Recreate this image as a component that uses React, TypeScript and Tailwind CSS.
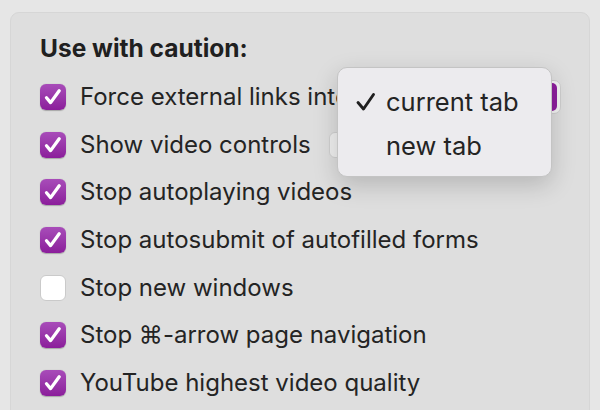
import React from 'react';

type Row = { label: string; checked: boolean; extra?: 'select' | 'toggle' };

const rows: Row[] = [
  { label: 'Force external links into', checked: true, extra: 'select' },
  { label: 'Show video controls', checked: true, extra: 'toggle' },
  { label: 'Stop autoplaying videos', checked: true },
  { label: 'Stop autosubmit of autofilled forms', checked: true },
  { label: 'Stop new windows', checked: false },
  { label: 'Stop ⌘-arrow page navigation', checked: true },
  { label: 'YouTube highest video quality', checked: true },
];

function Checkbox({ checked }: { checked: boolean }) {
  if (!checked) {
    return <div className="h-[26px] w-[26px] shrink-0 rounded-[6px] border border-[#cacaca] bg-white" />;
  }
  return (
    <div className="flex h-[26px] w-[26px] shrink-0 items-center justify-center rounded-[6px] bg-gradient-to-b from-[#a84cb9] to-[#8b1d9b] shadow-[0_0.5px_1px_rgba(0,0,0,0.25)]">
      <svg width="26" height="26" viewBox="0 0 26 26">
        <path d="M6.5 13.8 L10.6 18.6 L19.2 6.8" fill="none" stroke="white" strokeWidth="3.3" strokeLinecap="round" strokeLinejoin="round" />
      </svg>
    </div>
  );
}

export default function App() {
  return (
    <div className="relative h-[410px] w-[600px] overflow-hidden bg-[#e6e6e6] px-[10px] pt-[12px] font-['Inter','Liberation_Sans',sans-serif] text-[#242424]">
      <div className="h-[420px] rounded-[9px] border border-[#d6d6d6] bg-[#dedede] pl-[29px] pt-[22px]">
        <div className="mb-[12px] h-[26px] text-[24.5px] font-bold leading-[26px] text-[#202020]">
          Use with caution:
        </div>
        {rows.map((r) => (
          <div key={r.label} className="flex h-[47.7px] items-center">
            <Checkbox checked={r.checked} />
            <span className="ml-[14px] whitespace-nowrap text-[24px] leading-[28px]">{r.label}</span>
            {r.extra === 'select' && (
              <div className="ml-[10px] flex h-[34px] w-[202px] shrink-0 items-center justify-end rounded-[7px] border border-[#cfcfcf] bg-[#f4f4f4] pr-[3px]">
                <div className="h-[28px] w-[18px] rounded-[5px] bg-[#8e1f9e]" />
              </div>
            )}
            {r.extra === 'toggle' && (
              <div className="ml-[18px] h-[26px] w-[60px] shrink-0 rounded-[6px] border border-[#d0d0d0] bg-[#efefef]" />
            )}
          </div>
        ))}
      </div>

      <div className="absolute left-[337px] top-[67px] h-[110px] w-[215px] rounded-[10px] border border-[#c4c4c4] bg-[#ecebee] shadow-[0_8px_24px_rgba(0,0,0,0.18)]">
        <div className="mt-[17px] flex h-[34px] items-center">
          <svg className="ml-[17px]" width="22" height="22" viewBox="0 0 22 22">
            <path d="M3 11.5 L8.5 18 L18.5 3.5" fill="none" stroke="#1f1f1f" strokeWidth="2.9" strokeLinecap="round" strokeLinejoin="round" />
          </svg>
          <span className="ml-[9px] text-[25.5px] leading-[30px]">current tab</span>
        </div>
        <div className="mt-[10px] flex h-[34px] items-center pl-[48px]">
          <span className="text-[25.5px] leading-[30px]">new tab</span>
        </div>
      </div>
    </div>
  );
}
